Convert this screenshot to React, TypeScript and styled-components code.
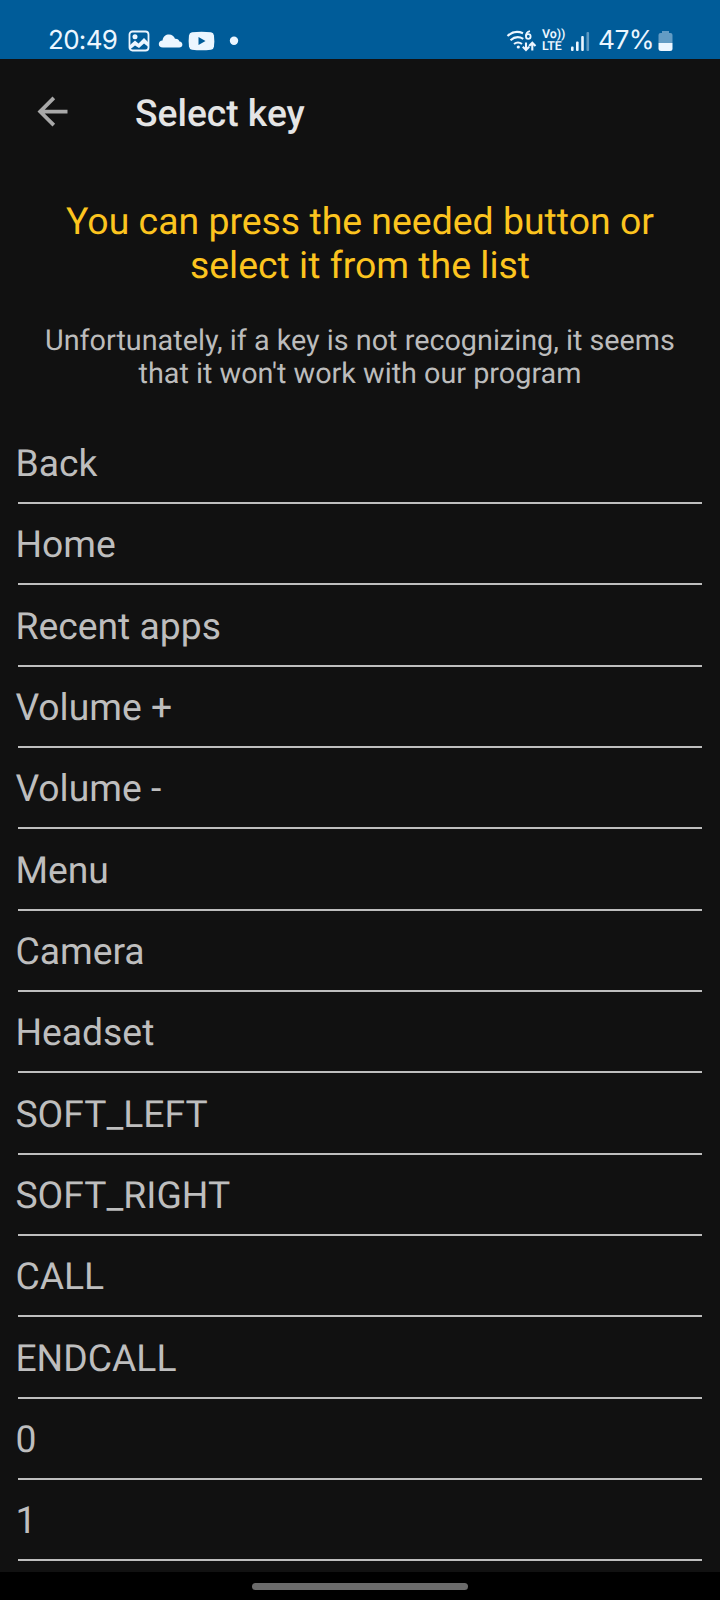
import React from "react";
import styled, { createGlobalStyle } from "styled-components";

const GlobalStyle = createGlobalStyle`
  * { box-sizing: border-box; }
  body { margin: 0; background: #000; }
`;

const Screen = styled.div`
  width: 720px;
  height: 1600px;
  display: flex;
  flex-direction: column;
  overflow: hidden;
  background: #111111;
  font-family: Roboto, "Liberation Sans", sans-serif;
  text-rendering: geometricPrecision;
`;

const StatusBar = styled.header`
  flex: none;
  height: 58.5px;
  padding: 23px 47px 0 48px;
  display: flex;
  justify-content: space-between;
  align-items: flex-start;
  background: #005c99;
  color: #ecf6ff;
`;

const StatusGroup = styled.div`
  display: flex;
  align-items: center;
  height: 36px;
`;

const StatusText = styled.span<{ $size: number; $width: number; $spacing?: number; $gap?: number }>`
  width: ${(p) => p.$width}px;
  margin-left: ${(p) => p.$gap ?? 0}px;
  font-family: Inter, Roboto, sans-serif;
  font-size: ${(p) => p.$size}px;
  line-height: 36px;
  letter-spacing: ${(p) => p.$spacing ?? 0}px;
  white-space: nowrap;
`;

const StatusIcon = styled.svg<{ $gap: number }>`
  flex: none;
  display: block;
  margin-left: ${(p) => p.$gap}px;
`;

const Network = styled.div`
  width: 22px;
  margin-left: 5px;
  display: flex;
  flex-direction: column;
  font: 600 12.4px/12px Roboto, sans-serif;
  white-space: nowrap;
`;

const Toolbar = styled.div`
  flex: none;
  height: 105px;
  padding: 30px 30px 0;
  display: flex;
  align-items: flex-start;
`;

const BackButton = styled.button`
  width: 45px;
  height: 45px;
  padding: 0;
  border: 0;
  background: none;
  color: #a9a9a9;
`;

const Title = styled.h1`
  margin: 3px 0 0 60px;
  font-size: 37.2px;
  font-weight: 500;
  line-height: 44px;
  color: #e5e5e5;
  white-space: nowrap;
`;

const Intro = styled.section`
  flex: none;
  height: 259px;
  padding-top: 36.5px;
  display: flex;
  flex-direction: column;
  align-items: center;
  text-align: center;
  white-space: nowrap;
`;

const Prompt = styled.p`
  margin: 0;
  font-size: 37.4px;
  line-height: 44px;
  color: #fcc41f;
`;

const Note = styled.p`
  margin: 36.5px 0 0;
  font-size: 28.78px;
  line-height: 33.4px;
  color: #bcbcbc;
`;

const KeyList = styled.ul`
  flex: none;
  height: 1149.5px;
  margin: 0;
  padding: 0 18px;
  list-style: none;
`;

const KeyRow = styled.li`
  height: 81.35px;
  padding-top: 19.5px;
  border-bottom: 2px solid #bebebe;
`;

const KeyLabel = styled.span`
  display: block;
  margin-left: -2.6px;
  font-size: 37.3px;
  line-height: 44px;
  color: #bebebe;
`;

const GestureArea = styled.footer`
  flex: none;
  height: 28px;
  padding-top: 11px;
  display: flex;
  justify-content: center;
  background: #000;
`;

const GestureHandle = styled.div`
  width: 216px;
  height: 7px;
  border-radius: 4px;
  background: #6b6b6b;
`;

const keys = [
  "Back", "Home", "Recent apps", "Volume +", "Volume -", "Menu", "Camera",
  "Headset", "SOFT_LEFT", "SOFT_RIGHT", "CALL", "ENDCALL", "0", "1",
];

const PictureIcon = () => (
  <StatusIcon $gap={11} width="22" height="22" viewBox="0 0 22 22">
    <rect x="1.5" y="1.5" width="19" height="19" rx="3" fill="none" stroke="currentColor" strokeWidth="1.8" />
    <circle cx="7" cy="6.8" r="2.5" fill="currentColor" />
    <path d="M2 15l5-4.5 3.5 3 5.500-5.500 4.500 4.500v4.500l-4.500-3.500-5 4.500-4-2.500-5 4z" fill="currentColor" />
  </StatusIcon>
);

const CloudIcon = () => (
  <StatusIcon $gap={8} width="25" height="22" viewBox="0 0 25 22">
    <path d="M5 17.5C2 17.5.8 16 .8 14c0-2 1.500-3.500 3.700-3.600C5.200 6.500 7.700 4.500 11 4.500c3 0 5 1.700 6 4.200 2.500-.2 4 1 4.500 2.800 1.800.2 2.900 1.400 2.900 3 0 1.800-1.300 3-3.200 3z" fill="currentColor" />
  </StatusIcon>
);

const VideoIcon = () => (
  <StatusIcon $gap={5} width="27" height="22" viewBox="0 0 27 22">
    <path d="M4 2.300Q13.500 1 23 2.300Q25.600 2.700 26 5.500Q26.700 11 26 16.500Q25.600 19.300 23 19.700Q13.500 21 4 19.700Q1.400 19.300 1 16.500Q.3 11 1 5.500Q1.400 2.700 4 2.300z" fill="currentColor" />
    <path d="M10.500 7v8l7-4z" fill="#005c99" />
  </StatusIcon>
);

const MoreDot = () => (
  <StatusIcon $gap={14} width="10" height="22" viewBox="0 0 10 22">
    <circle cx="5" cy="10.8" r="4.2" fill="currentColor" />
  </StatusIcon>
);

const WifiIcon = () => (
  <StatusIcon $gap={0} width="31" height="24" viewBox="0 0 31 24">
    <g fill="none" stroke="currentColor" strokeWidth="2.1">
      <path d="M1.500 7C6 2.800 12 2 17 4.200" />
      <path d="M4.500 11.200c4-3.500 8.500-3.800 12.800-1.400" />
      <path d="M8 15c2.600-2 5.400-2 8 0" />
      <path d="M20 13.500v7.500M16.800 17.800l3.200 3.200 3.200-3.200M26.300 21.500v-7.500M23.100 17l3.200-3.200 3.200 3.200" />
      <path d="M24 2.200c-2.700.6-4 2.700-4 5" strokeWidth="1.8" />
      <circle cx="22.3" cy="7.5" r="2.3" strokeWidth="1.8" />
    </g>
    <circle cx="12.3" cy="18" r="1.6" fill="currentColor" />
  </StatusIcon>
);

const SignalIcon = () => (
  <StatusIcon $gap={6} width="20" height="22" viewBox="0 0 20 22" fill="currentColor">
    <rect x="1" y="16.5" width="2.6" height="4.5" rx="1" />
    <rect x="6" y="11.5" width="2.6" height="9.5" rx="1" />
    <rect x="11.2" y="6" width="2.6" height="15" rx="1" />
    <rect x="16.5" y="2" width="2.6" height="19" rx="1" opacity=".4" />
  </StatusIcon>
);

const BatteryIcon = () => (
  <StatusIcon $gap={4} width="15" height="22" viewBox="0 0 15 22" fill="currentColor">
    <path d="M4 1h7v2h1.500Q14.500 3 14.500 5v8H.5V5Q.5 3 2.500 3H4z" opacity=".42" />
    <path d="M.5 13h14v5.500q0 2.500-2.500 2.500H3Q.5 21 .5 18.500z" />
  </StatusIcon>
);

export default function App() {
  return (
    <>
      <GlobalStyle />
      <Screen>
        <StatusBar>
          <StatusGroup>
            <StatusText $size={26} $width={69} $spacing={-0.7}>20:49</StatusText>
            <PictureIcon />
            <CloudIcon />
            <VideoIcon />
            <MoreDot />
          </StatusGroup>
          <StatusGroup>
            <WifiIcon />
            <Network>
              <span>Vo))</span>
              <span>LTE</span>
            </Network>
            <SignalIcon />
            <StatusText $size={26.3} $width={56} $spacing={-0.5} $gap={8}>47%</StatusText>
            <BatteryIcon />
          </StatusGroup>
        </StatusBar>
        <Toolbar>
          <BackButton aria-label="Back">
            <svg width="45" height="45" viewBox="0 0 24 24" fill="currentColor">
              <path d="M20 11H7.830l5.590-5.590L12 4l-8 8 8 8 1.410-1.410L7.830 13H20v-2z" />
            </svg>
          </BackButton>
          <Title>Select key</Title>
        </Toolbar>
        <Intro>
          <Prompt>You can press the needed button or<br />select it from the list</Prompt>
          <Note>Unfortunately, if a key is not recognizing, it seems<br />that it won't work with our program</Note>
        </Intro>
        <KeyList>
          {keys.map((key) => (
            <KeyRow key={key}><KeyLabel>{key}</KeyLabel></KeyRow>
          ))}
        </KeyList>
        <GestureArea><GestureHandle /></GestureArea>
      </Screen>
    </>
  );
}
